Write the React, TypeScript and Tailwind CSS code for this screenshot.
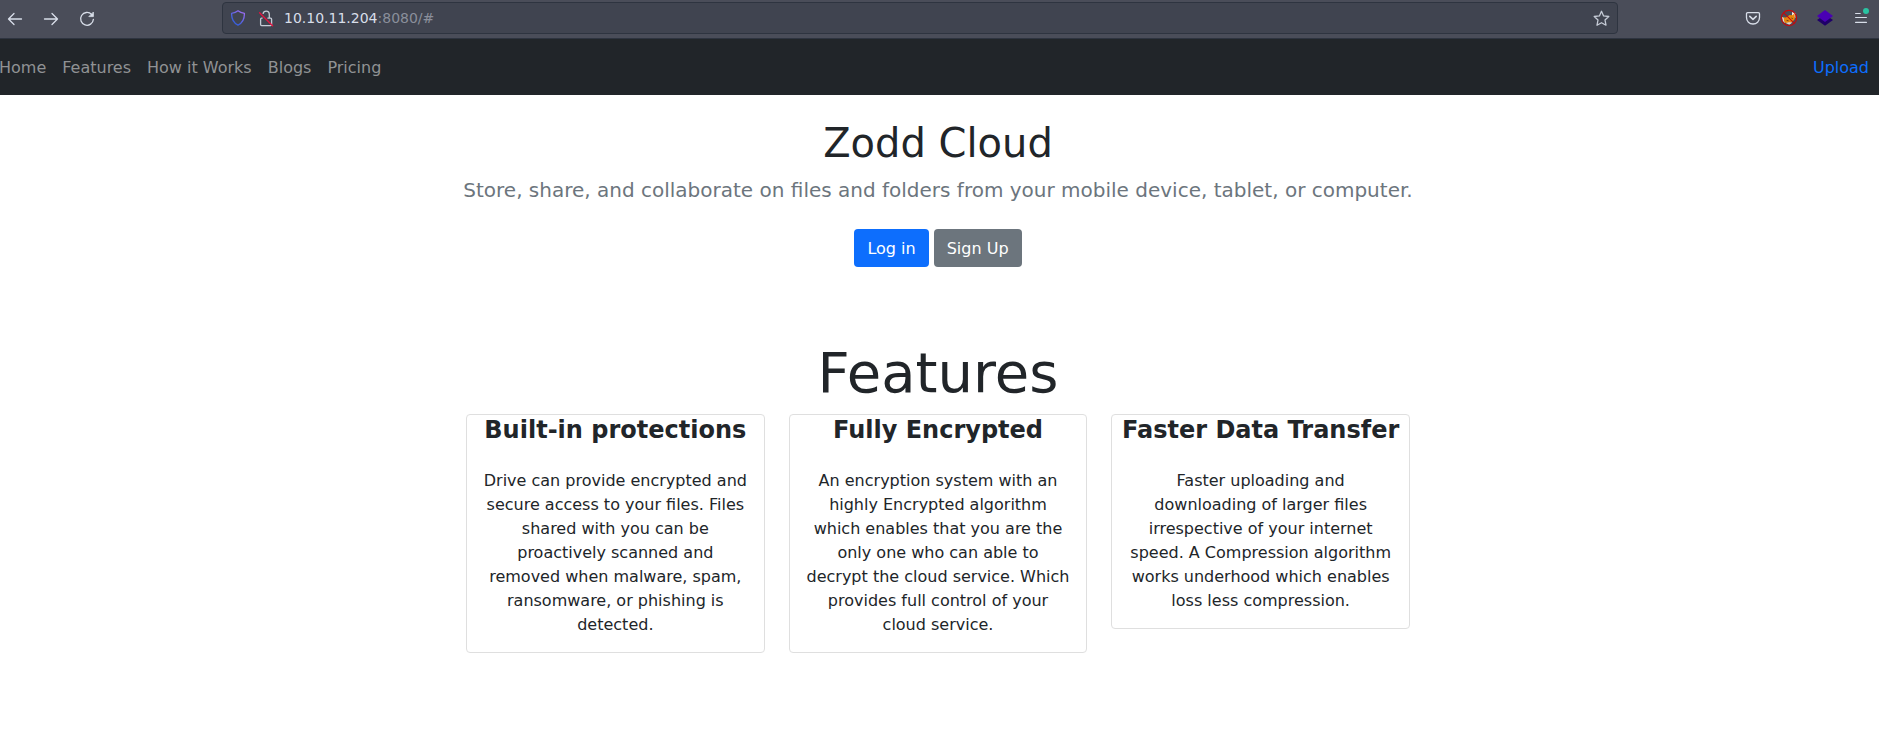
import React from "react";

const navLinks = ["Home", "Features", "How it Works", "Blogs", "Pricing"];

const features = [
  {
    title: "Built-in protections",
    text: "Drive can provide encrypted and secure access to your files. Files shared with you can be proactively scanned and removed when malware, spam, ransomware, or phishing is detected.",
  },
  {
    title: "Fully Encrypted",
    text: "An encryption system with an highly Encrypted algorithm which enables that you are the only one who can able to decrypt the cloud service. Which provides full control of your cloud service.",
  },
  {
    title: "Faster Data Transfer",
    text: "Faster uploading and downloading of larger files irrespective of your internet speed. A Compression algorithm works underhood which enables loss less compression.",
  },
];

const stroke = {
  fill: "none",
  stroke: "#d8dee9",
  strokeWidth: 1.3,
  strokeLinecap: "round" as const,
  strokeLinejoin: "round" as const,
};

function BackIcon() {
  return (
    <svg width="16" height="16" viewBox="0 0 16 16" {...stroke}>
      <path d="M14.5 8H1.8M7 2.5L1.5 8L7 13.5" />
    </svg>
  );
}

function ForwardIcon() {
  return (
    <svg width="16" height="16" viewBox="0 0 16 16" {...stroke}>
      <path d="M1.5 8H14.2M9 2.5L14.5 8L9 13.5" />
    </svg>
  );
}

function ReloadIcon() {
  return (
    <svg width="16" height="16" viewBox="0 0 16 16" {...stroke}>
      <path d="M12.6 3.4A6.4 6.4 0 1 0 14.4 8.3" />
      <path d="M14.4 1.4V5.6H10.2Z" fill="#d8dee9" strokeWidth="0.8" />
    </svg>
  );
}

function ShieldIcon() {
  return (
    <svg width="16" height="16" viewBox="0 0 16 16" fill="none">
      <defs>
        <linearGradient id="shield" x1="3" y1="14" x2="13" y2="2" gradientUnits="userSpaceOnUse">
          <stop offset="0.2" stopColor="#3a5fdc" />
          <stop offset="1" stopColor="#9a6cf0" />
        </linearGradient>
      </defs>
      <path
        d="M8 0.8C9.8 2.3 12 3 14.4 3.3C14.6 8.8 12.8 12.8 8 15.2C3.2 12.8 1.4 8.8 1.6 3.3C4 3 6.2 2.3 8 0.8Z"
        stroke="url(#shield)"
        strokeWidth="1.3"
        strokeLinejoin="round"
      />
    </svg>
  );
}

function InsecureIcon() {
  return (
    <svg width="16" height="17" viewBox="0 0 16 17" fill="none">
      <path
        d="M5 3.8C5.4 1.9 6.6 1.1 8.2 1.1C10.2 1.1 11.3 2.5 11.3 4.6V8M4.6 8.2H3.6C2.9 8.2 2.6 8.5 2.6 9.2V14.6C2.6 15.3 2.9 15.7 3.6 15.7H12.6C13.3 15.7 13.6 15.3 13.6 14.6V9.2C13.6 8.5 13.3 8.2 12.6 8.2H9.4"
        stroke="#c5cbd6"
        strokeWidth="1.3"
      />
      <path d="M1.6 2.8L14.6 15.8" stroke="#e2143f" strokeWidth="1.4" strokeLinecap="round" />
    </svg>
  );
}

function StarIcon() {
  return (
    <svg width="17" height="17" viewBox="0 0 17 17" {...stroke} stroke="#c5cbd6">
      <path d="M8.5 1.3L10.6 5.9L15.8 6.5L12 10L13 15.2L8.5 12.7L4 15.2L5 10L1.2 6.5L6.4 5.9Z" />
    </svg>
  );
}

function PocketIcon() {
  return (
    <svg width="16" height="16" viewBox="0 0 16 16" {...stroke}>
      <path d="M2.6 2.6H13.4C14.1 2.6 14.5 3 14.5 3.7V7.6C14.5 11.4 11.7 14 8 14C4.3 14 1.5 11.4 1.5 7.6V3.7C1.5 3 1.9 2.6 2.6 2.6Z" />
      <path d="M4.8 6.4L8 9.3L11.2 6.4" strokeWidth="1.6" />
    </svg>
  );
}

function FoxIcon() {
  return (
    <svg width="18" height="18" viewBox="0 0 18 18" fill="none">
      <path d="M2 8L4.5 9L5 14L2.8 12Z" fill="#e8e4df" />
      <path d="M12 3L15.5 4L15.4 9L12 7Z" fill="#efe9e2" />
      <path d="M3.5 8.2L6 8.6L9.5 6L12.3 6.2L14.6 4.6L14.8 10L12.5 12.8L9.5 14.6L5.4 14L4 12Z" fill="#e8850c" />
      <path d="M5.8 14L9 13.2L12.4 13.4L9.3 15.8Z" fill="#d9d4d0" />
      <path d="M6.6 11.4L8.6 11.8M11.4 9L12.8 9.6" stroke="#6b4218" />
      <circle cx="9" cy="9" r="7.6" stroke="#c4090c" strokeWidth="1.2" />
      <path d="M3.6 3.6L14.4 14.4" stroke="#c4090c" strokeWidth="1.1" />
    </svg>
  );
}

function LayersIcon() {
  return (
    <svg width="16" height="16" viewBox="0 0 16 16">
      <path d="M0 10L8 4.6L16 10L8 15.8Z" fill="#1f0068" />
      <path d="M0 6L8 0L16 6L8 12Z" fill="#4a00b4" />
    </svg>
  );
}

function MenuIcon() {
  return (
    <svg width="16" height="18" viewBox="0 0 16 18" fill="none" className="overflow-visible">
      <path d="M1.6 4.5H6.2M1.6 8.5H12.4M1.6 13.4H12.4" stroke="#d8dee9" strokeWidth="1.2" strokeLinecap="round" />
      <circle cx="12" cy="2" r="3" fill="#2ac3a2" />
    </svg>
  );
}

export default function App() {
  return (
    <div className="flex h-[751px] w-[1879px] flex-col overflow-hidden bg-white font-['DejaVu_Sans',sans-serif] text-base text-[#212529]">
      <header className="flex h-[39px] shrink-0 items-start border-b border-[#2e3440] bg-[#4a4d59] pt-[2px]">
        <div className="flex h-8 w-[222px] shrink-0 items-center gap-5 pl-[7px] pt-px">
          <BackIcon />
          <ForwardIcon />
          <ReloadIcon />
        </div>
        <div className="flex h-8 w-[1396px] shrink-0 items-center rounded border border-[#2e3440] bg-[#404450] pl-[7px] pr-[7px]">
          <ShieldIcon />
          <span className="ml-3">
            <InsecureIcon />
          </span>
          <span className="ml-[10px] flex-1 text-[14px] leading-5 text-[#8a8f9b]">
            <span className="text-[#d8dee9]">10.10.11.204</span>:8080/#
          </span>
          <StarIcon />
        </div>
        <div className="flex h-8 flex-1 items-center justify-end pr-[9px]">
          <PocketIcon />
          <span className="ml-[19px]">
            <FoxIcon />
          </span>
          <span className="ml-[19px]">
            <LayersIcon />
          </span>
          <span className="ml-[21px]">
            <MenuIcon />
          </span>
        </div>
      </header>

      <nav className="flex h-14 shrink-0 items-center justify-between bg-[#212529] pr-[10px] pt-[2px]">
        <ul className="-ml-px flex gap-4">
          {navLinks.map((label) => (
            <li key={label}>
              <a href="#" className="text-[#909294]">{label}</a>
            </li>
          ))}
        </ul>
        <a href="#" className="text-[#0d6efd]">Upload</a>
      </nav>

      <main className="flex w-[1876px] flex-col items-center pt-6 text-center">
        <h1 className="text-[40px] leading-[48px]">Zodd Cloud</h1>
        <p className="mt-2 text-xl leading-[30px] text-[#6c757d]">
          Store, share, and collaborate on files and folders from your mobile device, tablet, or computer.
        </p>
        <div className="mt-6 flex gap-[5px]">
          <a href="#" className="rounded bg-[#0d6efd] px-[13px] pb-1.5 pt-2 leading-6 text-white">Log in</a>
          <a href="#" className="rounded bg-[#6c757d] px-[13px] pb-1.5 pt-2 leading-6 text-white">Sign Up</a>
        </div>

        <h2 className="mt-[72px] text-[56px] leading-[67.2px]">Features</h2>
        <section className="mt-2 grid w-[944px] grid-cols-3 items-start gap-6">
          {features.map((f) => (
            <article key={f.title} className="rounded border border-[#dfdfdf] pt-px">
              <h3 className="whitespace-nowrap text-2xl font-bold leading-[28.8px]">{f.title}</h3>
              <p className="mt-2 px-4 pb-[15px] pt-4 leading-6">{f.text}</p>
            </article>
          ))}
        </section>
      </main>
    </div>
  );
}
